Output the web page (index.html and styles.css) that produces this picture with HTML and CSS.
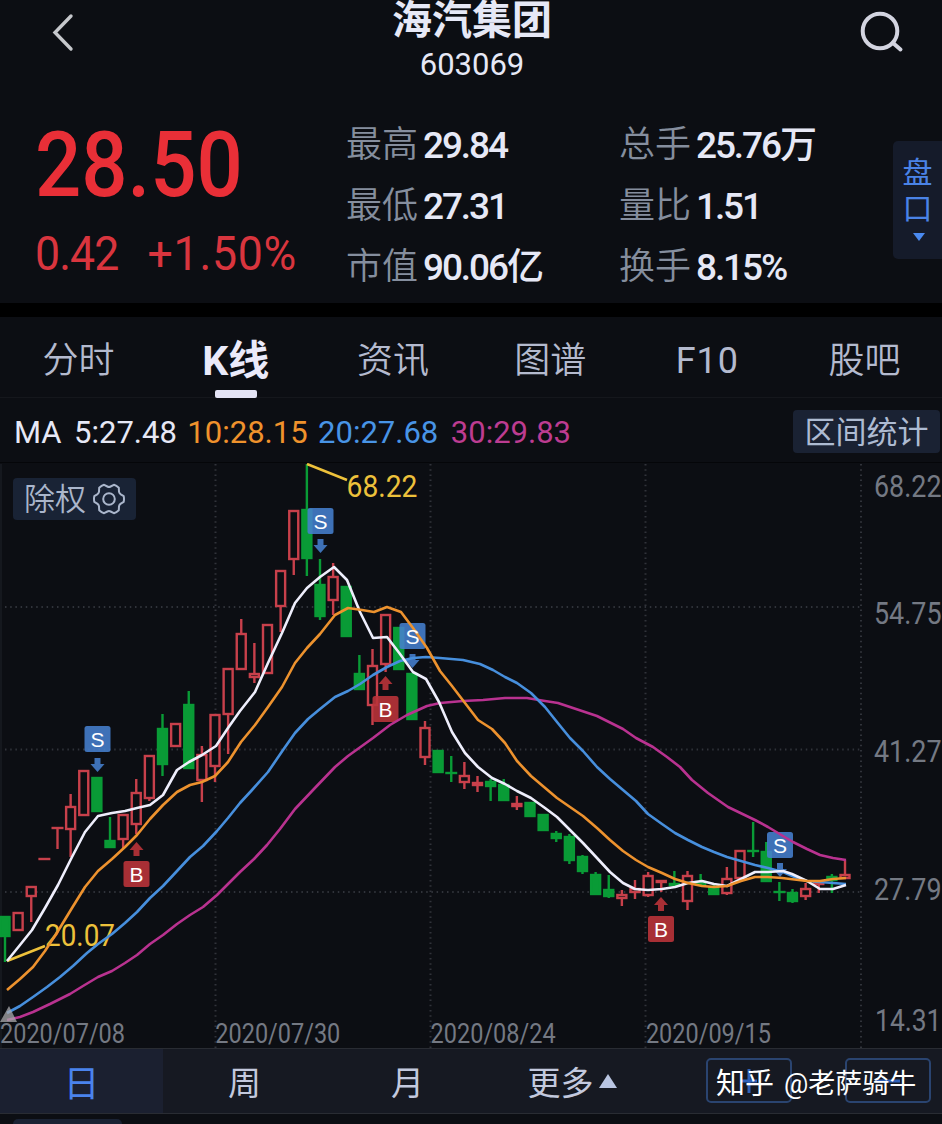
FILE: index.html
```html
<!DOCTYPE html>
<html lang="zh-CN">
<head>
    <meta charset="UTF-8">
    <meta name="viewport" content="width=device-width, initial-scale=1.0">
    <title>海汽集团 603069</title>
    <link rel="stylesheet" href="styles.css">
</head>
<body>
    <div class="app">
        <!-- Header -->
        <header class="header">
            <svg class="icon-back" width="24" height="42" viewBox="0 0 24 42">
                <path d="M20 4L4 20.5L20 37"/>
            </svg>
            <div class="stock">
                <h1>海汽集团</h1>
                <p>603069</p>
            </div>
            <svg class="icon-search" width="48" height="46" viewBox="0 0 48 46">
                <circle cx="23" cy="22" r="17.3"/>
                <path d="M36 34L43.500 40.500"/>
            </svg>
        </header>

        <!-- Quote -->
        <section class="quote">
            <div class="price">
                <div class="price-now">28.50</div>
                <div class="price-change"><span class="diff">0.42</span><span class="percent">+1.50%</span></div>
            </div>
            <div class="stats stats-left">
                <div class="stat"><span>最高</span><b>29.84</b></div>
                <div class="stat"><span>最低</span><b>27.31</b></div>
                <div class="stat"><span>市值</span><b>90.06亿</b></div>
            </div>
            <div class="stats">
                <div class="stat"><span>总手</span><b>25.76万</b></div>
                <div class="stat"><span>量比</span><b>1.51</b></div>
                <div class="stat"><span>换手</span><b>8.15%</b></div>
            </div>
            <div class="handicap">
                <span>盘</span>
                <span>口</span>
                <i class="arrow-down"></i>
            </div>
        </section>

        <!-- Tabs -->
        <nav class="tabs">
            <a>分时</a>
            <a class="active">K线</a>
            <a>资讯</a>
            <a>图谱</a>
            <a class="latin">F10</a>
            <a>股吧</a>
        </nav>

        <!-- Moving averages -->
        <div class="ma-row">
            <span class="ma-name">MA</span>
            <span class="ma5">5:27.48</span>
            <span class="ma10">10:28.15</span>
            <span class="ma20">20:27.68</span>
            <span class="ma30">30:29.83</span>
            <button class="range-button">区间统计</button>
        </div>

        <!-- K line chart -->
        <div class="chart">
            <svg id="kline" width="942" height="585" viewBox="0 463 942 585"></svg>
            <button class="adjust-button">
                除权
                <svg width="32" height="32" viewBox="-16 -16 32 32">
                    <path d="M14.700-2.900Q15.300 0 14.700 2.900L11.800 4.600Q10.400 5.500 10 7.200L9.800 11.300Q7.500 13.500 4.900 14.200L1.600 12.500Q0 11.700-1.600 12.500L-4.900 14.200Q-7.500 13.500-9.800 11.300L-10 7.200Q-10.400 5.500-11.800 4.600L-14.700 2.900Q-15.300 0-14.700-2.900L-11.800-4.600Q-10.400-5.500-10-7.200L-9.800-11.300Q-7.500-13.500-4.900-14.200L-1.600-12.500Q0-11.700 1.600-12.500L4.900-14.200Q7.500-13.500 9.800-11.300L10-7.200Q10.400-5.500 11.800-4.600Z"/>
                    <circle r="5.800"/>
                </svg>
            </button>
        </div>

        <!-- Period bar -->
        <div class="periods">
            <a class="active">日</a>
            <a>周</a>
            <a>月</a>
            <a class="more">更多<i class="arrow-up"></i></a>
            <div class="zoom-buttons">
                <button><svg width="16" height="24" viewBox="0 0 16 24"><path d="M0 12H16M8 0V24"/></svg></button>
                <button><svg width="24" height="24" viewBox="0 0 24 24"><path d="M0 12H24"/></svg></button>
            </div>
            <div class="watermark"><span>知乎</span><span>@老萨骑牛</span></div>
        </div>

        <div class="bottom"><div class="bottom-chip"></div></div>
    </div>

    <script src="chart.js"></script>
</body>
</html>
```
FILE: styles.css
```css
body {
    margin: 0;
    background-color: #0c0e13;
    font-family: Roboto, "Noto Sans CJK SC", sans-serif;
    color: #e6e8f6;
}

h1, p {
    margin: 0;
}

button {
    border: none;
    padding: 0;
    font-family: inherit;
}

.app {
    width: 942px;
    height: 1124px;
    overflow: hidden;
}

/* Header */
.header {
    height: 112px;
    display: flex;
    justify-content: space-between;
    align-items: flex-start;
    padding: 0 37px 0 51px;
}

.icon-back {
    margin-top: 12px;
    margin-right: 12px;
    fill: none;
    stroke: #c6c8cc;
    stroke-width: 3.4;
    stroke-linecap: round;
}

.icon-search {
    margin-top: 9px;
    fill: none;
    stroke: #d3d4e0;
    stroke-width: 4;
    stroke-linecap: round;
}

.stock {
    text-align: center;
}

.stock h1 {
    font-size: 40px;
    line-height: 42px;
    font-weight: 700;
}

.stock p {
    font-size: 31px;
    line-height: 45px;
}

/* Quote */
.quote {
    height: 191px;
    display: flex;
    border-bottom: 14px solid #000;
}

.price {
    width: 311px;
    padding-left: 35px;
    color: #e92f37;
}

.price-now {
    font-size: 90px;
    line-height: 108px;
    font-weight: 500;
    transform: scaleX(0.905);
    transform-origin: left;
}

.price-change {
    display: flex;
    font-size: 48px;
    line-height: 68px;
    color: #d9353e;
    transform: scaleX(0.93);
    transform-origin: left;
}

.diff {
    width: 121px;
    letter-spacing: -1px;
}

.percent {
    letter-spacing: 0.8px;
}

.stats {
    padding-top: 2px;
}

.stats-left {
    width: 273px;
}

.stat {
    height: 61px;
    display: flex;
    align-items: center;
    white-space: nowrap;
}

.stat span {
    width: 77px;
    font-size: 36px;
    line-height: 60px;
    font-weight: 350;
    color: #858e9e;
}

.stat b {
    font-size: 37px;
    line-height: 60px;
    padding-top: 2px;
    font-weight: 500;
    letter-spacing: -2.1px;
}

.handicap {
    width: 49px;
    height: 118px;
    margin: 29px 0 0 auto;
    box-sizing: border-box;
    padding-top: 14px;
    border-radius: 5px 0 0 5px;
    background-color: #151b2a;
    color: #4a83e6;
    display: flex;
    flex-direction: column;
    align-items: center;
    font-size: 30px;
    line-height: 36px;
}

.arrow-down {
    margin-top: 6px;
    margin-left: 2px;
    border: 6.5px solid transparent;
    border-top: 8px solid #4a8af0;
    border-bottom: none;
}

/* Tabs */
.tabs {
    height: 80px;
    display: grid;
    grid-template-columns: repeat(6, 157.2px);
    border-bottom: 1px solid #15171c;
}

.tabs a {
    display: flex;
    flex-direction: column;
    align-items: center;
    font-size: 36px;
    line-height: 88px;
    font-weight: 350;
    color: #b4bace;
}

.tabs .latin {
    font-weight: 400;
    letter-spacing: 1px;
}

.tabs .active {
    font-size: 41px;
    font-weight: 700;
    color: #eaeafa;
}

.tabs .active::after {
    content: "";
    width: 42px;
    height: 8px;
    margin-top: -15px;
    border-radius: 2px;
    background-color: #e4e4f5;
}

/* Moving averages */
.ma-row {
    height: 60px;
    border-bottom: 1px solid #050609;
    padding: 4px 2px 0 14px;
    display: flex;
    align-items: center;
    font-size: 31px;
    gap: 10.5px;
}

.ma-name {
    margin-right: 2px;
}

.ma10 {
    color: #ef922c;
}

.ma20 {
    color: #4894e6;
    margin-right: 2px;
}

.ma30 {
    color: #bd3c91;
}

.range-button {
    width: 147px;
    height: 43px;
    margin: -1px 0 0 auto;
    border-radius: 4px;
    background-color: #1a2233;
    color: #adbbd2;
    font-size: 31px;
    line-height: 46px;
}

/* Chart */
.chart {
    height: 585px;
    position: relative;
}

.chart svg {
    display: block;
}

.adjust-button {
    position: absolute;
    left: 13px;
    top: 15px;
    width: 123px;
    height: 42px;
    border-radius: 4px;
    background-color: #192335;
    color: #aab6cb;
    font-size: 31px;
    font-weight: 350;
    line-height: 47px;
    display: flex;
    align-items: center;
    justify-content: center;
    gap: 7px;
}

.adjust-button svg {
    fill: none;
    stroke: #aab6cb;
    stroke-width: 2;
    stroke-linejoin: round;
}

.grid-line {
    stroke: #30333a;
    stroke-width: 2;
    stroke-dasharray: 1.5 3.7;
}

.up {
    fill: #0c0e13;
    stroke: #c8404b;
    stroke-width: 2.4;
}

.down {
    fill: #099b36;
    stroke: #099b36;
    stroke-width: 2.4;
}

.ma-line {
    fill: none;
    stroke-width: 2.6;
    stroke-linejoin: round;
}

.line5 { stroke: #eeeefc; }
.line10 { stroke: #ed922e; }
.line20 { stroke: #478fdd; }
.line30 { stroke: #b93290; }

.axis-text {
    fill: #747983;
    font-size: 31px;
}

.date-text {
    fill: #747983;
    font-size: 27px;
}

.peak-text {
    fill: #edc13b;
    font-size: 31px;
}

.peak-line {
    stroke: #edc13b;
    stroke-width: 2.6;
}

.sell { fill: #457fce; fill-opacity: 0.88; }
.buy { fill: #b9333a; fill-opacity: 0.9; }

.mark-text {
    fill: #fff;
    font-family: "Liberation Sans", sans-serif;
    font-size: 21px;
    text-anchor: middle;
}

/* Period bar */
.periods {
    height: 66px;
    box-sizing: border-box;
    border-top: 1px solid #292c33;
    border-bottom: 1px solid #292c33;
    background-color: #161922;
    display: flex;
    position: relative;
}

.periods a {
    width: 163px;
    display: flex;
    align-items: center;
    justify-content: center;
    font-size: 33px;
    color: #c3c9de;
}

.periods .active {
    background-color: #1b2030;
    color: #4a83ec;
    font-size: 36px;
}

.periods .more {
    width: 166px;
    gap: 5px;
}

.arrow-up {
    border: 9px solid transparent;
    border-bottom: 14px solid #b9c5e2;
    border-top: none;
}

.zoom-buttons {
    margin-left: auto;
    padding: 9px 11px 0 0;
    display: flex;
    gap: 53px;
}

.zoom-buttons button {
    width: 86px;
    height: 45px;
    box-sizing: border-box;
    border: 2px solid #2a4470;
    border-radius: 5px;
    background-color: transparent;
    display: flex;
    align-items: center;
    justify-content: center;
}

.zoom-buttons svg {
    stroke: #2f61b8;
    stroke-width: 3;
}

.watermark {
    position: absolute;
    left: 716px;
    top: 16px;
    display: flex;
    gap: 10px;
    font-size: 27px;
    line-height: 39px;
    color: #fff;
    white-space: nowrap;
}

.watermark span:first-child {
    font-size: 29px;
}

.bottom {
    padding: 5px 0 0 13px;
}

.bottom-chip {
    width: 109px;
    height: 20px;
    border-radius: 5px;
    background-color: #1a2233;
}
```
FILE: chart.js
```js
const svg = document.getElementById('kline');

// type, body top, body bottom, high, low
const candles = [
    ['g', 917, 936, 916, 962], ['r', 913, 930, 913, 930], ['r', 887, 896, 887, 922], ['r', 859, 859, 859, 859],
    ['r', 828, 828, 828, 849], ['r', 807, 829, 794, 857], ['r', 771, 815, 771, 815], ['g', 778, 811, 778, 811],
    ['g', 841, 847, 817, 847], ['r', 815, 839, 815, 848], ['r', 793, 824, 779, 834], ['r', 756, 798, 755, 801],
    ['g', 729, 764, 714, 776], ['r', 724, 746, 724, 746], ['g', 705, 768, 691, 768], ['r', 755, 780, 746, 802],
    ['r', 715, 766, 715, 782], ['r', 669, 714, 669, 754], ['r', 634, 669, 619, 669], ['r', 674, 677, 643, 683],
    ['r', 625, 673, 625, 673], ['r', 571, 606, 571, 632], ['r', 511, 559, 511, 575], ['g', 510, 558, 464, 576],
    ['g', 585, 616, 559, 620], ['r', 577, 600, 563, 615], ['g', 587, 636, 587, 636], ['g', 674, 689, 655, 689],
    ['r', 666, 705, 649, 725], ['r', 615, 664, 615, 672], ['g', 628, 669, 628, 669], ['g', 674, 719, 674, 719],
    ['r', 728, 757, 721, 765], ['g', 751, 772, 751, 772], ['g', 773, 773, 756, 782], ['r', 776, 782, 762, 789],
    ['r', 783, 785, 776, 792], ['g', 782, 786, 779, 801], ['g', 785, 800, 779, 800], ['r', 804, 806, 796, 810],
    ['g', 803, 816, 803, 816], ['g', 815, 830, 815, 830], ['g', 834, 838, 831, 842], ['g', 837, 860, 834, 864],
    ['g', 857, 871, 855, 874], ['g', 875, 894, 872, 894], ['g', 890, 896, 875, 898], ['r', 895, 898, 890, 906],
    ['r', 889, 892, 880, 899], ['r', 876, 895, 872, 897], ['r', 881, 882, 881, 892], ['g', 884, 885, 871, 887],
    ['r', 876, 901, 871, 910], ['g', 882, 884, 874, 886], ['g', 888, 894, 885, 894], ['r', 879, 893, 867, 895],
    ['r', 851, 878, 851, 878], ['g', 851, 851, 822, 857], ['g', 852, 881, 842, 881], ['g', 892, 892, 882, 901],
    ['g', 893, 901, 889, 903], ['r', 889, 896, 883, 900], ['r', 882, 884, 881, 893], ['g', 877, 880, 874, 893],
    ['r', 875, 878, 860, 878]
];

const lines = {
    line30: '7,1020 20,1017 33,1012 50,1004 70,994 83,986 98,977 112,971 125,963 137,955 150,944 163,935 177,924 190,915 203,907 217,895 240,872 254,859 267,845 280,829 295,809 313,790 335,767 348,756 373,738 390,725 407,715 427,706 440,703 463,701 483,700 505,698 527,698 545,701 558,703 570,707 597,716 623,729 636,738 653,747 667,757 680,767 692,780 708,793 728,807 755,820 768,827 783,836 793,842 807,849 820,855 833,858 846,860',
    line20: '7,1013 20,1006 33,997 47,987 60,977 73,966 87,953 98,944 112,934 125,923 137,912 150,898 163,886 177,871 190,857 203,846 217,831 228,818 240,803 252,790 268,772 283,750 295,733 308,719 320,709 335,697 348,691 360,684 373,675 387,667 400,661 413,658 426,657 440,658 463,660 480,664 493,670 505,677 517,683 531,693 545,707 557,722 570,738 583,751 597,767 610,779 623,790 636,801 648,814 662,824 675,833 688,840 702,847 714,852 727,857 741,861 755,865 768,868 783,872 797,878 807,881 820,882 833,883 846,884',
    line5: '7,961 20,945 32,930 45,908 58,885 72,857 85,832 98,816 112,813 125,811 137,808 150,805 163,795 177,770 189,762 202,755 216,746 228,728 240,711 255,692 268,663 282,633 295,603 307,588 320,577 334,567 347,580 360,612 373,638 387,637 400,654 413,672 426,679 439,702 452,732 465,753 478,767 492,778 505,784 517,791 531,798 545,808 557,817 570,830 583,843 597,858 610,872 623,883 635,889 648,890 662,889 675,887 688,883 702,881 714,884 727,886 741,879 755,872 768,872 783,871 792,874 807,881 820,889 833,889 846,885',
    line10: '7,990 20,979 33,967 45,951 58,931 72,908 85,887 98,871 112,859 125,847 137,835 150,819 163,805 177,792 190,785 202,782 215,776 228,762 241,742 255,725 268,707 282,687 295,663 307,648 320,634 335,615 348,608 362,610 374,612 387,607 401,612 413,628 427,648 440,671 452,686 465,703 478,720 492,729 505,743 517,761 531,776 544,787 557,798 570,807 583,816 597,828 610,840 623,851 636,860 648,867 662,873 675,879 688,883 702,886 714,887 727,886 741,881 755,877 768,877 782,878 807,881 820,881 833,879 846,878'
};

// type, arrow x, box top, arrow top
const marks = [
    ['S', 97.500, 726, 758], ['B', 136.500, 861, 843], ['S', 320.500, 508, 539], ['B', 385.500, 696, 677],
    ['S', 412.500, 623, 654], ['B', 661, 916, 898], ['S', 780, 832, 863]
];

let html = '';

// Grid
html += '<path class="grid-line" d="M5 607H861M5 749.5H861M5 892H861"/>';
html += '<path class="grid-line" d="M215.500 464V1048M430.500 464V1048M645.500 464V1048M861 464V1048"/>';
html += '<path d="M1 464V1048" stroke="#15181e" stroke-width="2"/>';

// Price and date labels
[['68.22', 874, 497], ['54.75', 874, 624], ['41.27', 874, 762], ['27.79', 874, 900], ['14.31', 875, 1031]].forEach(t => {
    html += `<text class="axis-text" x="${t[1]}" y="${t[2]}" textLength="${941.5 - t[1]}" lengthAdjust="spacingAndGlyphs">${t[0]}</text>`;
});
['2020/07/08', '2020/07/30', '2020/08/24', '2020/09/15'].forEach((d, i) => {
    html += `<text class="date-text" x="${i * 215.3}" y="1042.500" textLength="125" lengthAdjust="spacingAndGlyphs">${d}</text>`;
});

// Candles
candles.forEach((c, i) => {
    const x = 5 + i * 13.125;
    const cls = c[0] === 'r' ? 'up' : 'down';
    html += `<path class="${cls}" d="M${x} ${c[3]}V${c[1]}M${x} ${c[2]}V${c[4]}"/>`;
    if (c[2] - c[1] < 1) {
        html += `<path class="${cls}" d="M${x - 6} ${c[1]}H${x + 6}"/>`;
    } else {
        html += `<rect class="${cls}" x="${x - 4.5}" y="${c[1]}" width="9" height="${c[2] - c[1]}"/>`;
    }
});

// High and low
html += '<path class="peak-line" d="M307 464L347 480M7 961L45 946"/>';
html += '<text class="peak-text" x="346.500" y="497" textLength="71" lengthAdjust="spacingAndGlyphs">68.22</text>';
html += '<text class="peak-text" x="45" y="946" textLength="70" lengthAdjust="spacingAndGlyphs">20.07</text>';

// Buy and sell marks
marks.forEach(m => {
    const [type, x, box, arrow] = m;
    const cls = type === 'S' ? 'sell' : 'buy';
    const d = type === 'S'
        ? `M${x - 3} ${arrow}h6v6h4l-7 8l-7 -8h4z`
        : `M${x - 3} ${arrow + 13}h6v-6h4l-7 -8l-7 8h4z`;
    html += `<path class="${cls}" d="${d}"/>`;
    html += `<rect class="${cls}" x="${x - 13}" y="${box}" width="26" height="26" rx="2.500"/>`;
});

for (const name in lines) {
    html += `<polyline class="ma-line ${name}" points="${lines[name]}"/>`;
}

marks.forEach(m => {
    html += `<text class="mark-text" x="${m[1]}" y="${m[2] + 20.5}">${m[0]}</text>`;
});

html += '<path d="M9 1006L17 1022H0Z" fill="#a9a9ae" fill-opacity="0.75"/>';

svg.innerHTML = html;
```
